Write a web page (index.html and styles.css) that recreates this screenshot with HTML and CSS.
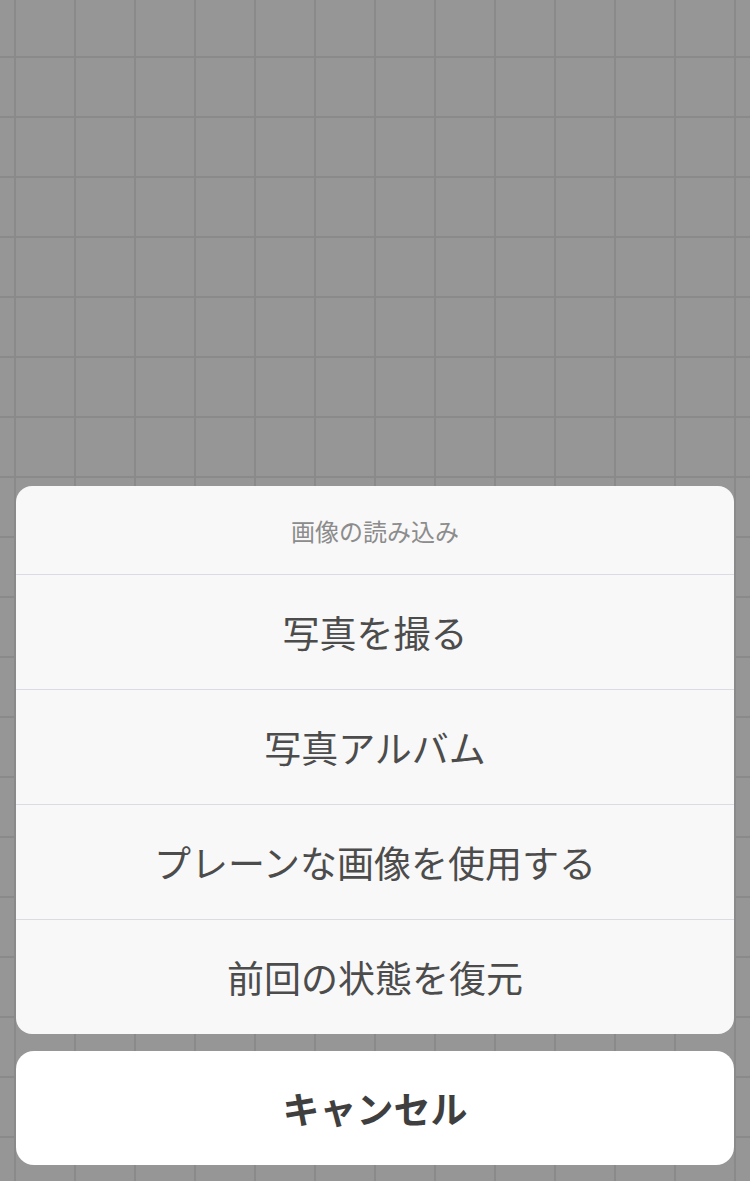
FILE: index.html
```html
<!DOCTYPE html>
<html lang="ja">
<head>
    <meta charset="UTF-8">
    <title>画像の読み込み</title>
    <link rel="stylesheet" href="styles.css">
</head>
<body>
<div class="screen">
    <div class="actionSheet">
        <div class="sheetTitle">画像の読み込み</div>
        <div class="sheetItem">写真を撮る</div>
        <div class="sheetItem">写真アルバム</div>
        <div class="sheetItem">プレーンな画像を使用する</div>
        <div class="sheetItem">前回の状態を復元</div>
    </div>
    <div class="cancelButton">キャンセル</div>
</div>
</body>
</html>
```

FILE: styles.css
```css
* {
    box-sizing: border-box;
}

body {
    margin: 0;
    font-family: "Noto Sans CJK JP", "Noto Sans", sans-serif;
    background-color: #969696;
    background-image:
        linear-gradient(to right, #8a8a8a 2px, transparent 2px),
        linear-gradient(to bottom, #8a8a8a 2px, transparent 2px);
    background-size: 60px 60px;
    background-position: 14px 56px;
}

.screen {
    height: 1181px;
    display: flex;
    flex-direction: column;
    justify-content: flex-end;
    gap: 17px;
    padding: 0 16px 16px 16px;
}

.actionSheet {
    background: #f8f8f8;
    border-radius: 16px;
    overflow: hidden;
}

.sheetTitle {
    height: 88px;
    display: flex;
    align-items: center;
    justify-content: center;
    font-size: 24px;
    color: #8c8c8c;
}

.sheetItem {
    height: 115px;
    border-top: 1px solid #dcdbe4;
    display: flex;
    align-items: center;
    justify-content: center;
    font-size: 37px;
    color: #4c4c4c;
}

.cancelButton {
    height: 114px;
    background: #ffffff;
    border-radius: 18px;
    display: flex;
    align-items: center;
    justify-content: center;
    font-size: 37px;
    font-weight: bold;
    color: #3f3f3f;
}
```
